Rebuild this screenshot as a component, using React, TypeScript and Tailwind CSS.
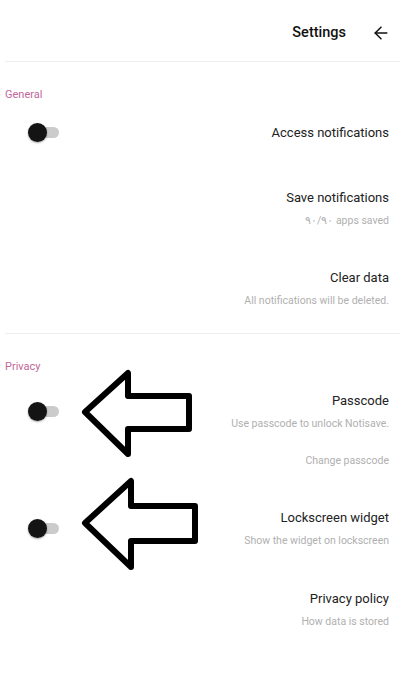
import { ArrowLeft } from 'lucide-react'

function Toggle() {
  return (
    <div className="relative w-[31px] h-[19px] ml-[28px] shrink-0">
      <div className="absolute left-[10px] top-[4px] w-[21px] h-[11px] rounded-full bg-[#cbcbcb]" />
      <div className="absolute left-0 top-0 w-[19px] h-[19px] rounded-full bg-[#141414] shadow-[0_1px_2px_rgba(0,0,0,0.35)]" />
    </div>
  )
}

function Title({ children }: { children: React.ReactNode }) {
  return <div className="text-[13px] leading-[18px] text-[#222]">{children}</div>
}

function Sub({ children, className = '' }: { children: React.ReactNode; className?: string }) {
  return <div className={`text-[10.5px] leading-[14px] text-[#b0b0b0] ${className}`}>{children}</div>
}

export default function App() {
  return (
    <div
      className="relative w-[400px] h-[700px] bg-white overflow-hidden"
      style={{ fontFamily: 'Roboto, "Noto Sans", sans-serif' }}
    >
      {/* header */}
      <header className="h-[61px] pt-[4px] flex items-center justify-end pr-[9px] gap-[25px]">
        <span className="text-[14.5px] font-medium text-[#111]">Settings</span>
        <ArrowLeft size={20} strokeWidth={1.8} className="text-[#111]" />
      </header>
      <div className="ml-[5px] h-px bg-[#eeeeee]" />

      {/* General */}
      <div className="mt-[26px] pl-[5px] text-[11px] leading-[14px] text-[#c2679a]">General</div>

      <div className="mt-[21px] flex items-center justify-between pr-[11px]">
        <Toggle />
        <Title>Access notifications</Title>
      </div>

      <div className="mt-[47px] flex flex-col items-end pr-[11px]">
        <Title>Save notifications</Title>
        <Sub className="mt-[7px]">٩٠/٩٠ apps saved</Sub>
      </div>

      <div className="mt-[41px] flex flex-col items-end pr-[11px]">
        <Title>Clear data</Title>
        <Sub className="mt-[7px]">All notifications will be deleted.</Sub>
      </div>

      <div className="mt-[25px] ml-[5px] h-px bg-[#eeeeee]" />

      {/* Privacy */}
      <div className="mt-[26px] pl-[5px] text-[11px] leading-[14px] text-[#c2679a]">Privacy</div>

      <div className="mt-[18px] flex items-center justify-between pr-[11px]">
        <Toggle />
        <div className="flex flex-col items-end">
          <Title>Passcode</Title>
          <Sub className="mt-[7px]">Use passcode to unlock Notisave.</Sub>
        </div>
      </div>
      <div className="mt-[23px] flex justify-end pr-[11px]">
        <Sub>Change passcode</Sub>
      </div>

      <div className="mt-[41px] flex items-center justify-between pr-[11px]">
        <Toggle />
        <div className="flex flex-col items-end">
          <Title>Lockscreen widget</Title>
          <Sub className="mt-[7px]">Show the widget on lockscreen</Sub>
        </div>
      </div>

      <div className="mt-[42px] flex flex-col items-end pr-[11px]">
        <Title>Privacy policy</Title>
        <Sub className="mt-[7px]">How data is stored</Sub>
      </div>

      {/* annotation arrows drawn over the screenshot */}
      <svg
        className="absolute inset-0 pointer-events-none"
        width="400"
        height="700"
        viewBox="0 0 400 700"
        fill="none"
        stroke="#000"
        strokeWidth="6"
        strokeLinejoin="round"
      >
        <path d="M85 412 L128 373 L128 396 L189 396 L189 429 L128 429 L128 454 Z" />
        <path d="M85 523 L131 481 L131 506 L195 506 L195 541 L131 541 L131 567 Z" />
      </svg>
    </div>
  )
}
